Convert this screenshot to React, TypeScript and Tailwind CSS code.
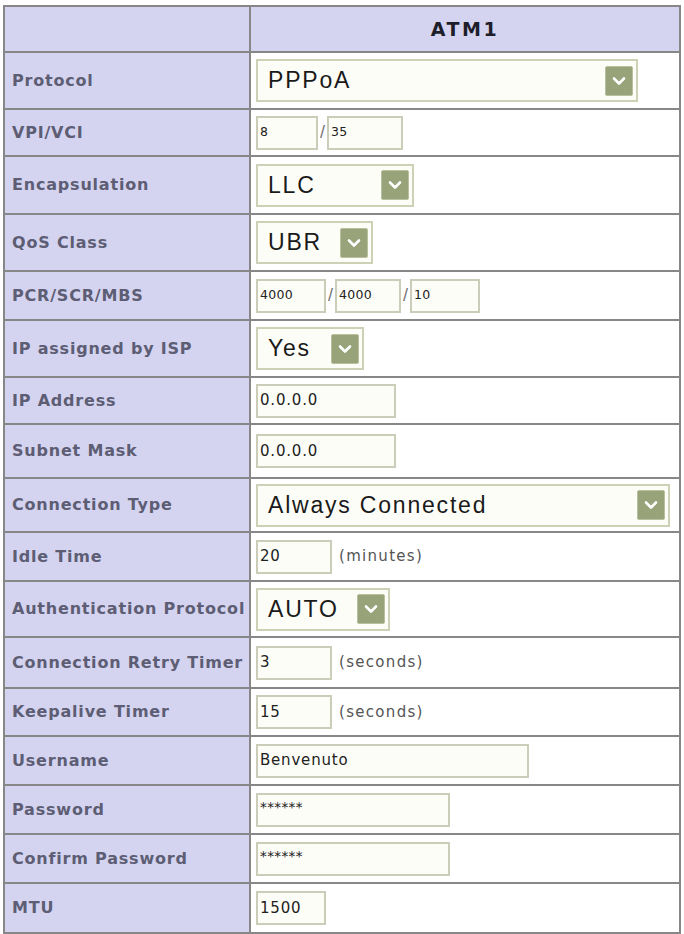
import React from "react";

const LABEL_FONT = "[font-family:'DejaVu_Sans',Verdana,sans-serif]";
const SEL_FONT = "[font-family:'Liberation_Sans',Arial,sans-serif]";

function Arrow() {
  return (
    <div className="ml-auto mr-[3px] flex h-[30px] w-[28px] shrink-0 items-center justify-center rounded-[2px] border border-[#b9c09e] bg-[#98a37a]">
      <svg width="14" height="10" viewBox="0 0 14 10">
        <path d="M2 2.5 L7 7.5 L12 2.5" stroke="#ffffff" strokeWidth="2.6" fill="none" strokeLinecap="round" strokeLinejoin="round" />
      </svg>
    </div>
  );
}

function Select({ w, text }: { w: string; text: string }) {
  return (
    <div className={"flex h-[43px] items-center border-2 border-[#cdd1b6] bg-[#fdfdf8] pl-[10px] " + w}>
      <span className={"text-[23px] tracking-[1.8px] text-[#1a1a1a] " + SEL_FONT}>{text}</span>
      <Arrow />
    </div>
  );
}

function Input({ w, text, small, top }: { w: string; text: string; small?: boolean; top?: boolean }) {
  return (
    <div
      className={
        "flex h-[34px] shrink-0 border-2 border-[#cbcdb8] bg-[#fdfdf7] pl-[2px] " +
        (top ? "items-start pt-[2px] " : "items-center ") +
        w
      }
    >
      <span
        className={
          (top
            ? "text-[13.5px] tracking-[0.4px] text-[#222] "
            : small
            ? "text-[12.5px] tracking-[0.3px] text-[#222] "
            : "text-[15px] tracking-[0.8px] text-[#222] ") + LABEL_FONT
        }
      >
        {text}
      </span>
    </div>
  );
}

function Slash() {
  return <span className={"mx-[2px] text-[18px] text-[#777] " + SEL_FONT}>/</span>;
}

function Unit({ text }: { text: string }) {
  return (
    <span className={"ml-[7px] text-[15px] tracking-[1.3px] text-[#555] " + LABEL_FONT}>{text}</span>
  );
}

type Row = { label: string; h: string; content: React.ReactNode };

const rows: Row[] = [
  { label: "Protocol", h: "h-[57px]", content: <Select w="w-[382px]" text="PPPoA" /> },
  {
    label: "VPI/VCI",
    h: "h-[47px]",
    content: (
      <>
        <Input w="w-[62px]" text="8" small />
        <Slash />
        <Input w="w-[76px]" text="35" small />
      </>
    ),
  },
  { label: "Encapsulation", h: "h-[58px]", content: <Select w="w-[158px]" text="LLC" /> },
  { label: "QoS Class", h: "h-[57px]", content: <Select w="w-[117px]" text="UBR" /> },
  {
    label: "PCR/SCR/MBS",
    h: "h-[49px]",
    content: (
      <>
        <Input w="w-[70px]" text="4000" small />
        <Slash />
        <Input w="w-[66px]" text="4000" small />
        <Slash />
        <Input w="w-[70px]" text="10" small />
      </>
    ),
  },
  { label: "IP assigned by ISP", h: "h-[57px]", content: <Select w="w-[108px]" text="Yes" /> },
  { label: "IP Address", h: "h-[47px]", content: <Input w="w-[140px]" text="0.0.0.0" /> },
  { label: "Subnet Mask", h: "h-[54px]", content: <Input w="w-[140px]" text="0.0.0.0" /> },
  { label: "Connection Type", h: "h-[54px]", content: <Select w="w-[414px]" text="Always Connected" /> },
  {
    label: "Idle Time",
    h: "h-[49px]",
    content: (
      <>
        <Input w="w-[76px]" text="20" />
        <Unit text="(minutes)" />
      </>
    ),
  },
  { label: "Authentication Protocol", h: "h-[56px]", content: <Select w="w-[134px]" text="AUTO" /> },
  {
    label: "Connection Retry Timer",
    h: "h-[51px]",
    content: (
      <>
        <Input w="w-[76px]" text="3" />
        <Unit text="(seconds)" />
      </>
    ),
  },
  {
    label: "Keepalive Timer",
    h: "h-[48px]",
    content: (
      <>
        <Input w="w-[76px]" text="15" />
        <Unit text="(seconds)" />
      </>
    ),
  },
  { label: "Username", h: "h-[49px]", content: <Input w="w-[273px]" text="Benvenuto" /> },
  { label: "Password", h: "h-[49px]", content: <Input w="w-[194px]" text="******" small top /> },
  { label: "Confirm Password", h: "h-[49px]", content: <Input w="w-[194px]" text="******" small top /> },
  { label: "MTU", h: "h-[48px]", content: <Input w="w-[70px]" text="1500" /> },
];

export default function App() {
  return (
    <div className="min-h-[934px] w-[684px] bg-white pl-[3px] pt-[5px]">
      <div className="w-[678px] border-2 border-[#878787]">
        <div className="grid h-[46px] grid-cols-[246px_1fr] border-b-2 border-[#878787]">
          <div className="border-r-2 border-[#878787] bg-[#d4d4f1]" />
          <div className="flex items-center justify-center bg-[#d4d4f1]">
            <span className={"text-[19px] font-bold tracking-[2.5px] text-[#1e1e2a] " + LABEL_FONT}>ATM1</span>
          </div>
        </div>
        {rows.map((r, i) => (
          <div
            key={r.label}
            className={
              "grid grid-cols-[246px_1fr] " +
              r.h +
              (i < rows.length - 1 ? " border-b-2 border-[#878787]" : "")
            }
          >
            <div className="flex items-center border-r-2 border-[#878787] bg-[#d4d4f1] pl-[7px]">
              <span className={"text-[16px] font-bold tracking-[0.8px] text-[#5d5d74] " + LABEL_FONT}>
                {r.label}
              </span>
            </div>
            <div className="flex items-center bg-white pl-[5px]">{r.content}</div>
          </div>
        ))}
      </div>
    </div>
  );
}
